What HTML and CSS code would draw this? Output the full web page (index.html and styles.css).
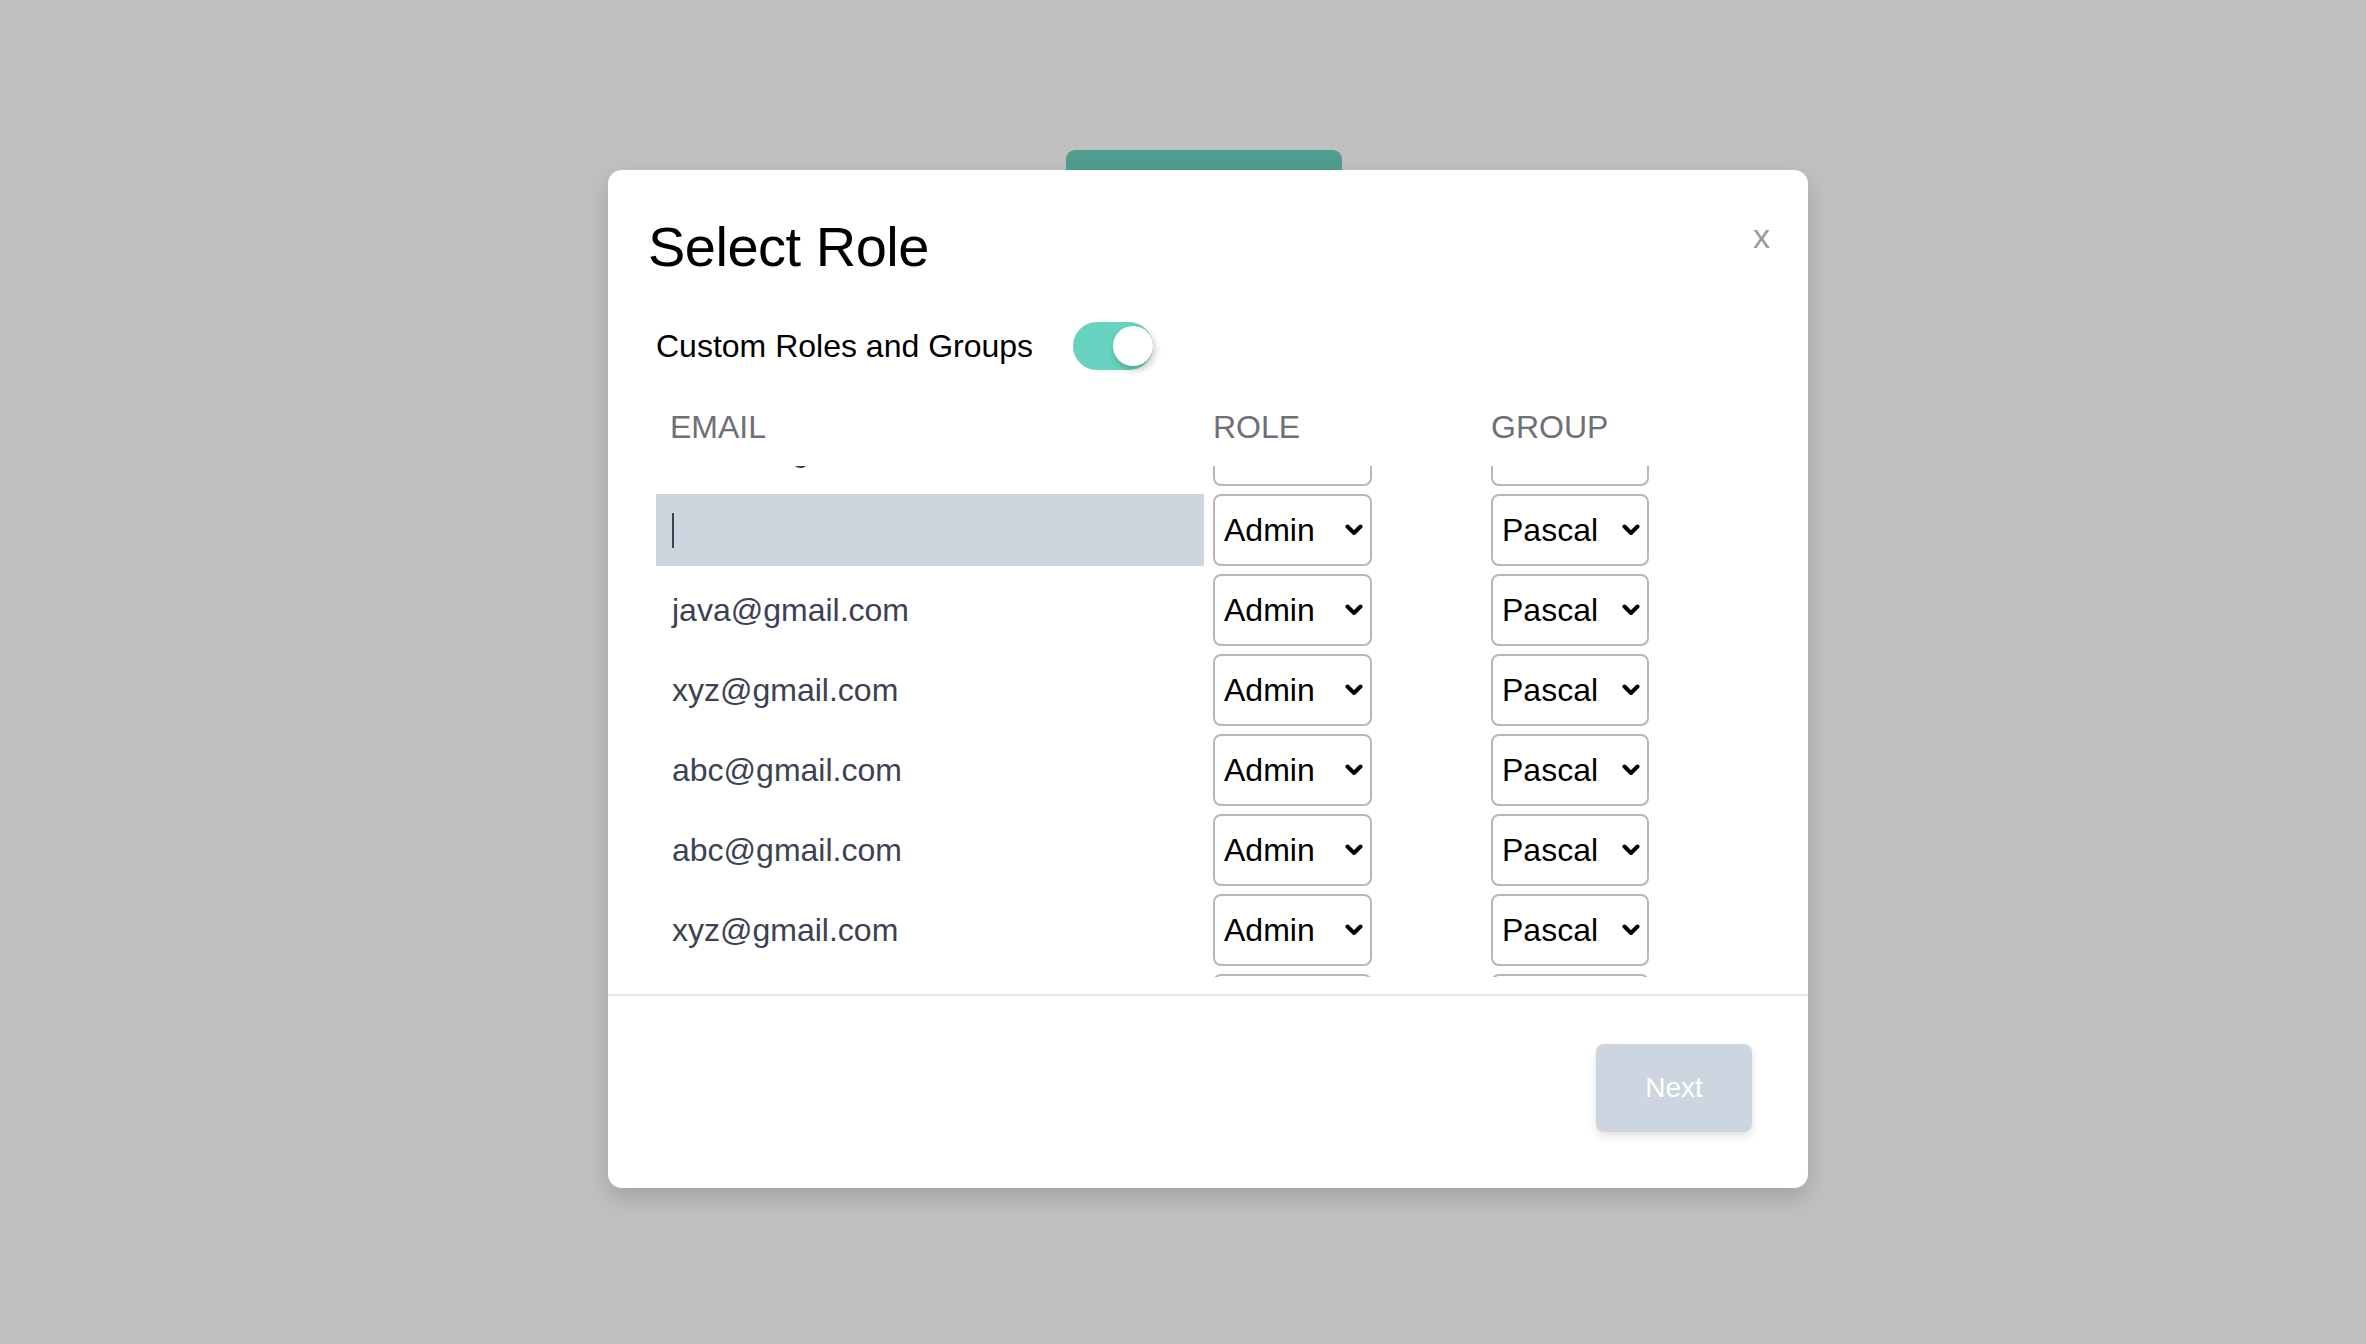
FILE: index.html
```html
<!DOCTYPE html>
<html lang="en">
<head>
<meta charset="utf-8">
<title>Select Role</title>
<link rel="stylesheet" href="styles.css">
</head>
<body>
<div class="backdrop">
  <div class="page-tab"></div>
  <div class="modal">
    <div class="modal-body">
      <div class="modal-head">
        <h1 class="title">Select Role</h1>
        <button class="close" type="button">x</button>
      </div>
      <div class="toggle-row">
        <span class="toggle-label">Custom Roles and Groups</span>
        <span class="switch"><span class="knob"></span></span>
      </div>
      <div class="thead">
        <div class="th th-email">EMAIL</div>
        <div class="th">ROLE</div>
        <div class="th">GROUP</div>
      </div>
      <div class="viewport">
        <div class="rows">
          <div class="row">
            <div class="email">admin@gmail.com</div>
            <div class="sel"><span>Admin</span><svg class="chev" width="18" height="12" viewBox="0 0 18 12"><polyline points="2.5,2.5 9,9 15.5,2.5"/></svg></div>
            <div class="sel"><span>Pascal</span><svg class="chev" width="18" height="12" viewBox="0 0 18 12"><polyline points="2.5,2.5 9,9 15.5,2.5"/></svg></div>
          </div>
          <div class="row">
            <div class="email email-input"><span class="caret"></span></div>
            <div class="sel"><span>Admin</span><svg class="chev" width="18" height="12" viewBox="0 0 18 12"><polyline points="2.5,2.5 9,9 15.5,2.5"/></svg></div>
            <div class="sel"><span>Pascal</span><svg class="chev" width="18" height="12" viewBox="0 0 18 12"><polyline points="2.5,2.5 9,9 15.5,2.5"/></svg></div>
          </div>
          <div class="row">
            <div class="email">java@gmail.com</div>
            <div class="sel"><span>Admin</span><svg class="chev" width="18" height="12" viewBox="0 0 18 12"><polyline points="2.5,2.5 9,9 15.5,2.5"/></svg></div>
            <div class="sel"><span>Pascal</span><svg class="chev" width="18" height="12" viewBox="0 0 18 12"><polyline points="2.5,2.5 9,9 15.5,2.5"/></svg></div>
          </div>
          <div class="row">
            <div class="email">xyz@gmail.com</div>
            <div class="sel"><span>Admin</span><svg class="chev" width="18" height="12" viewBox="0 0 18 12"><polyline points="2.5,2.5 9,9 15.5,2.5"/></svg></div>
            <div class="sel"><span>Pascal</span><svg class="chev" width="18" height="12" viewBox="0 0 18 12"><polyline points="2.5,2.5 9,9 15.5,2.5"/></svg></div>
          </div>
          <div class="row">
            <div class="email">abc@gmail.com</div>
            <div class="sel"><span>Admin</span><svg class="chev" width="18" height="12" viewBox="0 0 18 12"><polyline points="2.5,2.5 9,9 15.5,2.5"/></svg></div>
            <div class="sel"><span>Pascal</span><svg class="chev" width="18" height="12" viewBox="0 0 18 12"><polyline points="2.5,2.5 9,9 15.5,2.5"/></svg></div>
          </div>
          <div class="row">
            <div class="email">abc@gmail.com</div>
            <div class="sel"><span>Admin</span><svg class="chev" width="18" height="12" viewBox="0 0 18 12"><polyline points="2.5,2.5 9,9 15.5,2.5"/></svg></div>
            <div class="sel"><span>Pascal</span><svg class="chev" width="18" height="12" viewBox="0 0 18 12"><polyline points="2.5,2.5 9,9 15.5,2.5"/></svg></div>
          </div>
          <div class="row">
            <div class="email">xyz@gmail.com</div>
            <div class="sel"><span>Admin</span><svg class="chev" width="18" height="12" viewBox="0 0 18 12"><polyline points="2.5,2.5 9,9 15.5,2.5"/></svg></div>
            <div class="sel"><span>Pascal</span><svg class="chev" width="18" height="12" viewBox="0 0 18 12"><polyline points="2.5,2.5 9,9 15.5,2.5"/></svg></div>
          </div>
          <div class="row">
            <div class="email">test@gmail.com</div>
            <div class="sel"><span>Admin</span><svg class="chev" width="18" height="12" viewBox="0 0 18 12"><polyline points="2.5,2.5 9,9 15.5,2.5"/></svg></div>
            <div class="sel"><span>Pascal</span><svg class="chev" width="18" height="12" viewBox="0 0 18 12"><polyline points="2.5,2.5 9,9 15.5,2.5"/></svg></div>
          </div>
        </div>
      </div>
    </div>
    <div class="modal-foot">
      <button class="next" type="button">Next</button>
    </div>
  </div>
</div>
</body>
</html>
```
FILE: styles.css
```css
* { box-sizing: border-box; }
html, body { margin: 0; padding: 0; }
body {
  font-family: "Liberation Sans", Arial, sans-serif;
  background: #c0c0c0;
}
.backdrop {
  position: relative;
  width: 2366px;
  height: 1344px;
  background: #c0c0c0;
  padding: 170px 0 0 608px;
  overflow: hidden;
}
.page-tab {
  position: absolute;
  left: 1066px;
  top: 150px;
  width: 276px;
  height: 40px;
  background: #4f9e8f;
  border-radius: 9px 9px 0 0;
}
.modal {
  position: relative;
  width: 1200px;
  height: 1018px;
  background: #ffffff;
  border-radius: 14px;
  box-shadow: 0 10px 22px rgba(0, 0, 0, 0.16);
  display: flex;
  flex-direction: column;
}
.modal-body {
  padding: 43px 38px 17px 40px;
}
.modal-head {
  display: flex;
  justify-content: space-between;
  align-items: flex-start;
}
.title {
  margin: 0;
  font-size: 56px;
  line-height: 67px;
  font-weight: 400;
  letter-spacing: -0.5px;
  color: #000000;
}
.close {
  margin-top: 6px;
  padding: 0;
  border: none;
  background: none;
  font-family: "Liberation Sans", Arial, sans-serif;
  font-size: 34px;
  line-height: 34px;
  color: #9a9aa2;
}
.toggle-row {
  margin-top: 42px;
  padding-left: 8px;
  height: 48px;
  display: flex;
  align-items: center;
  gap: 40px;
}
.toggle-label {
  font-size: 32px;
  line-height: 48px;
  color: #000000;
}
.switch {
  width: 80px;
  height: 48px;
  border-radius: 24px;
  background: #66d2bf;
  display: flex;
  align-items: center;
  justify-content: flex-end;
}
.knob {
  width: 40px;
  height: 40px;
  border-radius: 50%;
  background: #ffffff;
  box-shadow: 2px 4px 7px rgba(0, 0, 0, 0.22);
}
.thead {
  margin-top: 33px;
  margin-left: 8px;
  display: grid;
  grid-template-columns: 557px 278px 158px;
}
.th {
  font-size: 32px;
  line-height: 48px;
  color: #6f6f78;
}
.th-email { padding-left: 14px; }
.viewport {
  margin-top: 15px;
  margin-left: 8px;
  height: 511px;
  overflow: hidden;
}
.rows {
  margin-top: -52px;
  display: flex;
  flex-direction: column;
  gap: 8px;
}
.row {
  display: grid;
  grid-template-columns: 557px 278px 158px;
  height: 72px;
}
.email {
  width: 548px;
  height: 72px;
  padding-left: 16px;
  font-size: 32px;
  line-height: 72px;
  color: #3b4252;
  display: flex;
  align-items: center;
}
.email-input {
  background: #cdd5df;
}
.caret {
  width: 2px;
  height: 35px;
  background: #3d4350;
}
.sel {
  width: 159px;
  height: 72px;
  border: 2px solid #bab6b6;
  border-radius: 8px;
  padding: 0 7px 0 9px;
  display: flex;
  align-items: center;
  justify-content: space-between;
  font-size: 32px;
  color: #000000;
  background: #ffffff;
}
.row .sel:last-child { width: 158px; }
.chev {
  fill: none;
  stroke: #000000;
  stroke-width: 4;
  stroke-linecap: round;
  stroke-linejoin: round;
}
.modal-foot {
  border-top: 2px solid #e6e7ec;
  padding: 48px 56px 56px 0;
  display: flex;
  justify-content: flex-end;
}
.next {
  width: 156px;
  height: 88px;
  border: none;
  border-radius: 8px;
  background: #cdd5e0;
  color: #ffffff;
  font-family: "Liberation Sans", Arial, sans-serif;
  font-size: 28px;
  box-shadow: 0 4px 8px rgba(0, 0, 0, 0.12);
}
```
